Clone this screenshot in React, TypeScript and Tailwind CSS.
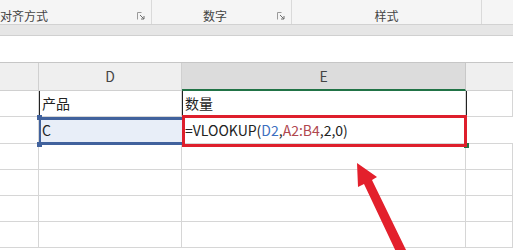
import React from "react";

const font = { fontFamily: '"Noto Sans CJK SC", "Noto Sans", sans-serif' };

function Launcher() {
  return (
    <svg width="8" height="8" viewBox="0 0 8 8" className="shrink-0">
      <path d="M0.5 0.5h4M0.5 0.5v7" stroke="#9a9a9a" strokeWidth="1" fill="none" />
      <path d="M3 3l4 4M7 4v3h-3" stroke="#6f6f6f" strokeWidth="1" fill="none" />
    </svg>
  );
}

const cols = ["w-[39px]", "w-[143px]", "w-[284px]", "flex-1"];

function Row({ cells, h = "h-[26px]" }: { cells?: React.ReactNode[]; h?: string }) {
  return (
    <div className={`flex ${h} border-b border-[#d6d6d6]`}>
      {cols.map((c, i) => (
        <div key={i} className={`${c} shrink-0 border-r border-[#d6d6d6] flex items-center pl-[3px] text-[14px] text-[#222]`}>
          {cells?.[i]}
        </div>
      ))}
    </div>
  );
}

export default function App() {
  return (
    <div className="relative w-[513px] h-[250px] overflow-hidden bg-white" style={font}>
      {/* ribbon group labels */}
      <div className="flex h-[25px] bg-[#f5f5f5] border-b border-[#d2d2d2] text-[12px] text-[#444]">
        <div className="w-[152px] flex items-center justify-between pt-[7px] pr-[6px] border-r border-[#dadada]">
          <span>对齐方式</span>
          <Launcher />
        </div>
        <div className="w-[140px] flex items-center justify-between pt-[7px] pl-[51px] pr-[6px] border-r border-[#dadada]">
          <span>数字</span>
          <Launcher />
        </div>
        <div className="w-[190px] flex items-center justify-center pt-[7px] border-r border-[#dadada]">
          <span>样式</span>
        </div>
        <div className="flex-1" />
      </div>
      <div className="h-[11px] bg-[#e6e6e6] border-b border-[#d0d0d0]" />
      <div className="h-[27px] bg-white border-b border-[#c6c6c6]" />

      {/* column headers */}
      <div className="flex h-[28px] text-[14px] text-[#444]">
        <div className="w-[39px] bg-[#efefef] border-r border-[#c8c8c8] border-b border-[#d0d0d0]" />
        <div className="w-[143px] bg-[#efefef] border-r border-[#c8c8c8] border-b border-[#d0d0d0] flex items-center justify-center">D</div>
        <div className="w-[284px] bg-[#dcdcdc] border-r border-[#c8c8c8] border-b-2 border-b-[#217346] flex items-center justify-center">E</div>
        <div className="flex-1 bg-[#efefef] border-b border-[#d0d0d0]" />
      </div>

      <Row cells={[null, <span key="a">产品</span>, <span key="b">数量</span>, null]} />
      <div className="flex h-[27px] border-b border-[#d6d6d6]">
        <div className="w-[39px] shrink-0 border-r border-[#d6d6d6]" />
        <div className="w-[143px] shrink-0 bg-[#e8eef8] flex items-center pl-[3px] text-[14px] text-[#222]">C</div>
        <div className="w-[284px] shrink-0 flex items-center pl-[3px] text-[14px] text-[#222]">
          =VLOOKUP(<span className="text-[#3c6fbf]">D2</span>,<span className="text-[#b0474f]">A2:B4</span>,2,0)
        </div>
        <div className="flex-1" />
      </div>
      <Row />
      <Row />
      <Row />
      <Row />

      {/* dark table borders on row 1 */}
      <div className="absolute left-[39px] top-[91px] w-[1px] h-[26px] bg-[#222]" />
      <div className="absolute left-[182px] top-[91px] w-[1px] h-[26px] bg-[#222]" />
      <div className="absolute left-[466px] top-[91px] w-[1px] h-[26px] bg-[#222]" />

      {/* D2 selection */}
      <div className="absolute left-[39px] top-[117px] w-[143px] h-[3px] bg-[#41629d]" />
      <div className="absolute left-[39px] top-[142px] w-[143px] h-[3px] bg-[#41629d]" />
      <div className="absolute left-[39px] top-[117px] w-[2px] h-[28px] bg-[#41629d]" />
      <div className="absolute left-[37px] top-[115px] w-[5px] h-[5px] bg-[#41629d]" />
      <div className="absolute left-[37px] top-[142px] w-[5px] h-[5px] bg-[#41629d]" />

      {/* green active cell handle */}
      <div className="absolute left-[464px] top-[143px] w-[5px] h-[5px] bg-[#217346]" />

      {/* red highlight box */}
      <div className="absolute left-[182px] top-[115px] w-[285px] h-[32px] border-[3px] border-[#de1f2c]" />

      {/* arrow */}
      <svg className="absolute left-0 top-0" width="513" height="250" viewBox="0 0 513 250">
        <path d="M357 163 L377 177 L372 180 L407 252 L398 256 L364 184 L358 187 Z" fill="#e3202c" />
      </svg>
    </div>
  );
}
